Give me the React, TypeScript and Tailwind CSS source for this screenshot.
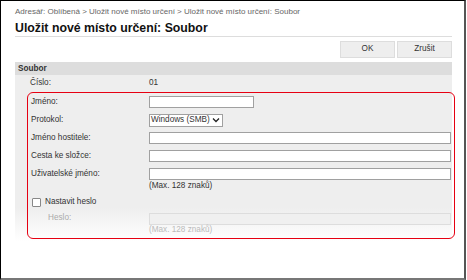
import React from "react";

const Row = ({ label, children }: { label: string; children: React.ReactNode }) => (
  <div className="flex items-center h-[18px]">
    <div className="w-[118px] shrink-0 text-[8.2px] text-[#333]">{label}</div>
    {children}
  </div>
);

const Input = ({ w, disabled }: { w?: string; disabled?: boolean }) => (
  <div
    className={`h-[12px] border ${
      disabled ? "border-[#ddd] bg-[#f0f0f0]" : "border-[#a0a0a0] bg-white"
    } ${w ?? "w-[302px]"}`}
  />
);

export default function App() {
  return (
    <div className="w-[466px] h-[280px] bg-white border-l border-t border-black border-r-2 border-r-[#555] border-b-2 border-b-[#777] font-['Liberation_Sans',Arial,sans-serif] overflow-hidden">
      <div className="pl-[14px] pr-[12px] pt-[5px]">
        <div className="text-[8px] leading-[12px] text-[#666] whitespace-nowrap">
          Adresář: Oblíbená &gt; Uložit nové místo určení &gt; Uložit nové místo určení: Soubor
        </div>
        <div className="mt-[3px] border-b border-[#ddd] h-[16px] text-[12.3px] leading-[15px] font-bold text-[#111]">
          Uložit nové místo určení: Soubor
        </div>
        <div className="flex justify-end gap-[2px] mt-[4px]">
          <button className="w-[55px] h-[17px] bg-[#eee] border border-[#ddd] text-[8.2px] text-[#333]">
            OK
          </button>
          <button className="w-[55px] h-[17px] bg-[#eee] border border-[#ddd] text-[8.2px] text-[#333]">
            Zrušit
          </button>
        </div>
        <div className="mt-[4px] h-[13px] bg-[#ddd] px-[3px] text-[8.2px] leading-[13px] font-bold text-[#333]">
          Soubor
        </div>
        <div className="bg-[linear-gradient(to_bottom,#eeeeee_80%,#ffffff)] pb-[2px]">
          <div className="flex items-center h-[17px] pl-[15px] text-[8.2px] text-[#333]">
            <div className="w-[119px]">Číslo:</div>
            <div>01</div>
          </div>
          <div className="ml-[12px] mr-[-3px] border border-[#e60012] rounded-[6px] pl-[3px] pb-[4px]">
            <Row label="Jméno:">
              <Input w="w-[105px]" />
            </Row>
            <Row label="Protokol:">
              <div className="h-[13px] w-[74px] border border-[#a0a0a0] bg-white flex items-center justify-between pl-[1px] pr-[2px] text-[8.2px] text-[#333] whitespace-nowrap">
                <span>Windows (SMB)</span>
                <svg width="8" height="6" viewBox="0 0 8 6">
                  <path d="M1 1.5 L4 4.5 L7 1.5" fill="none" stroke="#222" strokeWidth="1.3" />
                </svg>
              </div>
            </Row>
            <Row label="Jméno hostitele:">
              <Input />
            </Row>
            <Row label="Cesta ke složce:">
              <Input />
            </Row>
            <Row label="Uživatelské jméno:">
              <Input />
            </Row>
            <div className="pl-[118px] mt-[-2px] text-[8.2px] leading-[10px] text-[#333]">(Max. 128 znaků)</div>
            <div className="flex items-center h-[18px] mt-[2px]">
              <div className="w-[9px] h-[9px] border border-[#888] bg-white rounded-[1px] mr-[4px] ml-[1px]" />
              <span className="text-[8.2px] text-[#333]">Nastavit heslo</span>
            </div>
            <div className="flex items-center h-[15px]">
              <div className="w-[118px] shrink-0 pl-[17px] text-[8.2px] text-[#aaa]">Heslo:</div>
              <Input disabled />
            </div>
            <div className="pl-[118px] text-[8.2px] leading-[8px] text-[#bbb]">(Max. 128 znaků)</div>
          </div>
        </div>
      </div>
    </div>
  );
}
